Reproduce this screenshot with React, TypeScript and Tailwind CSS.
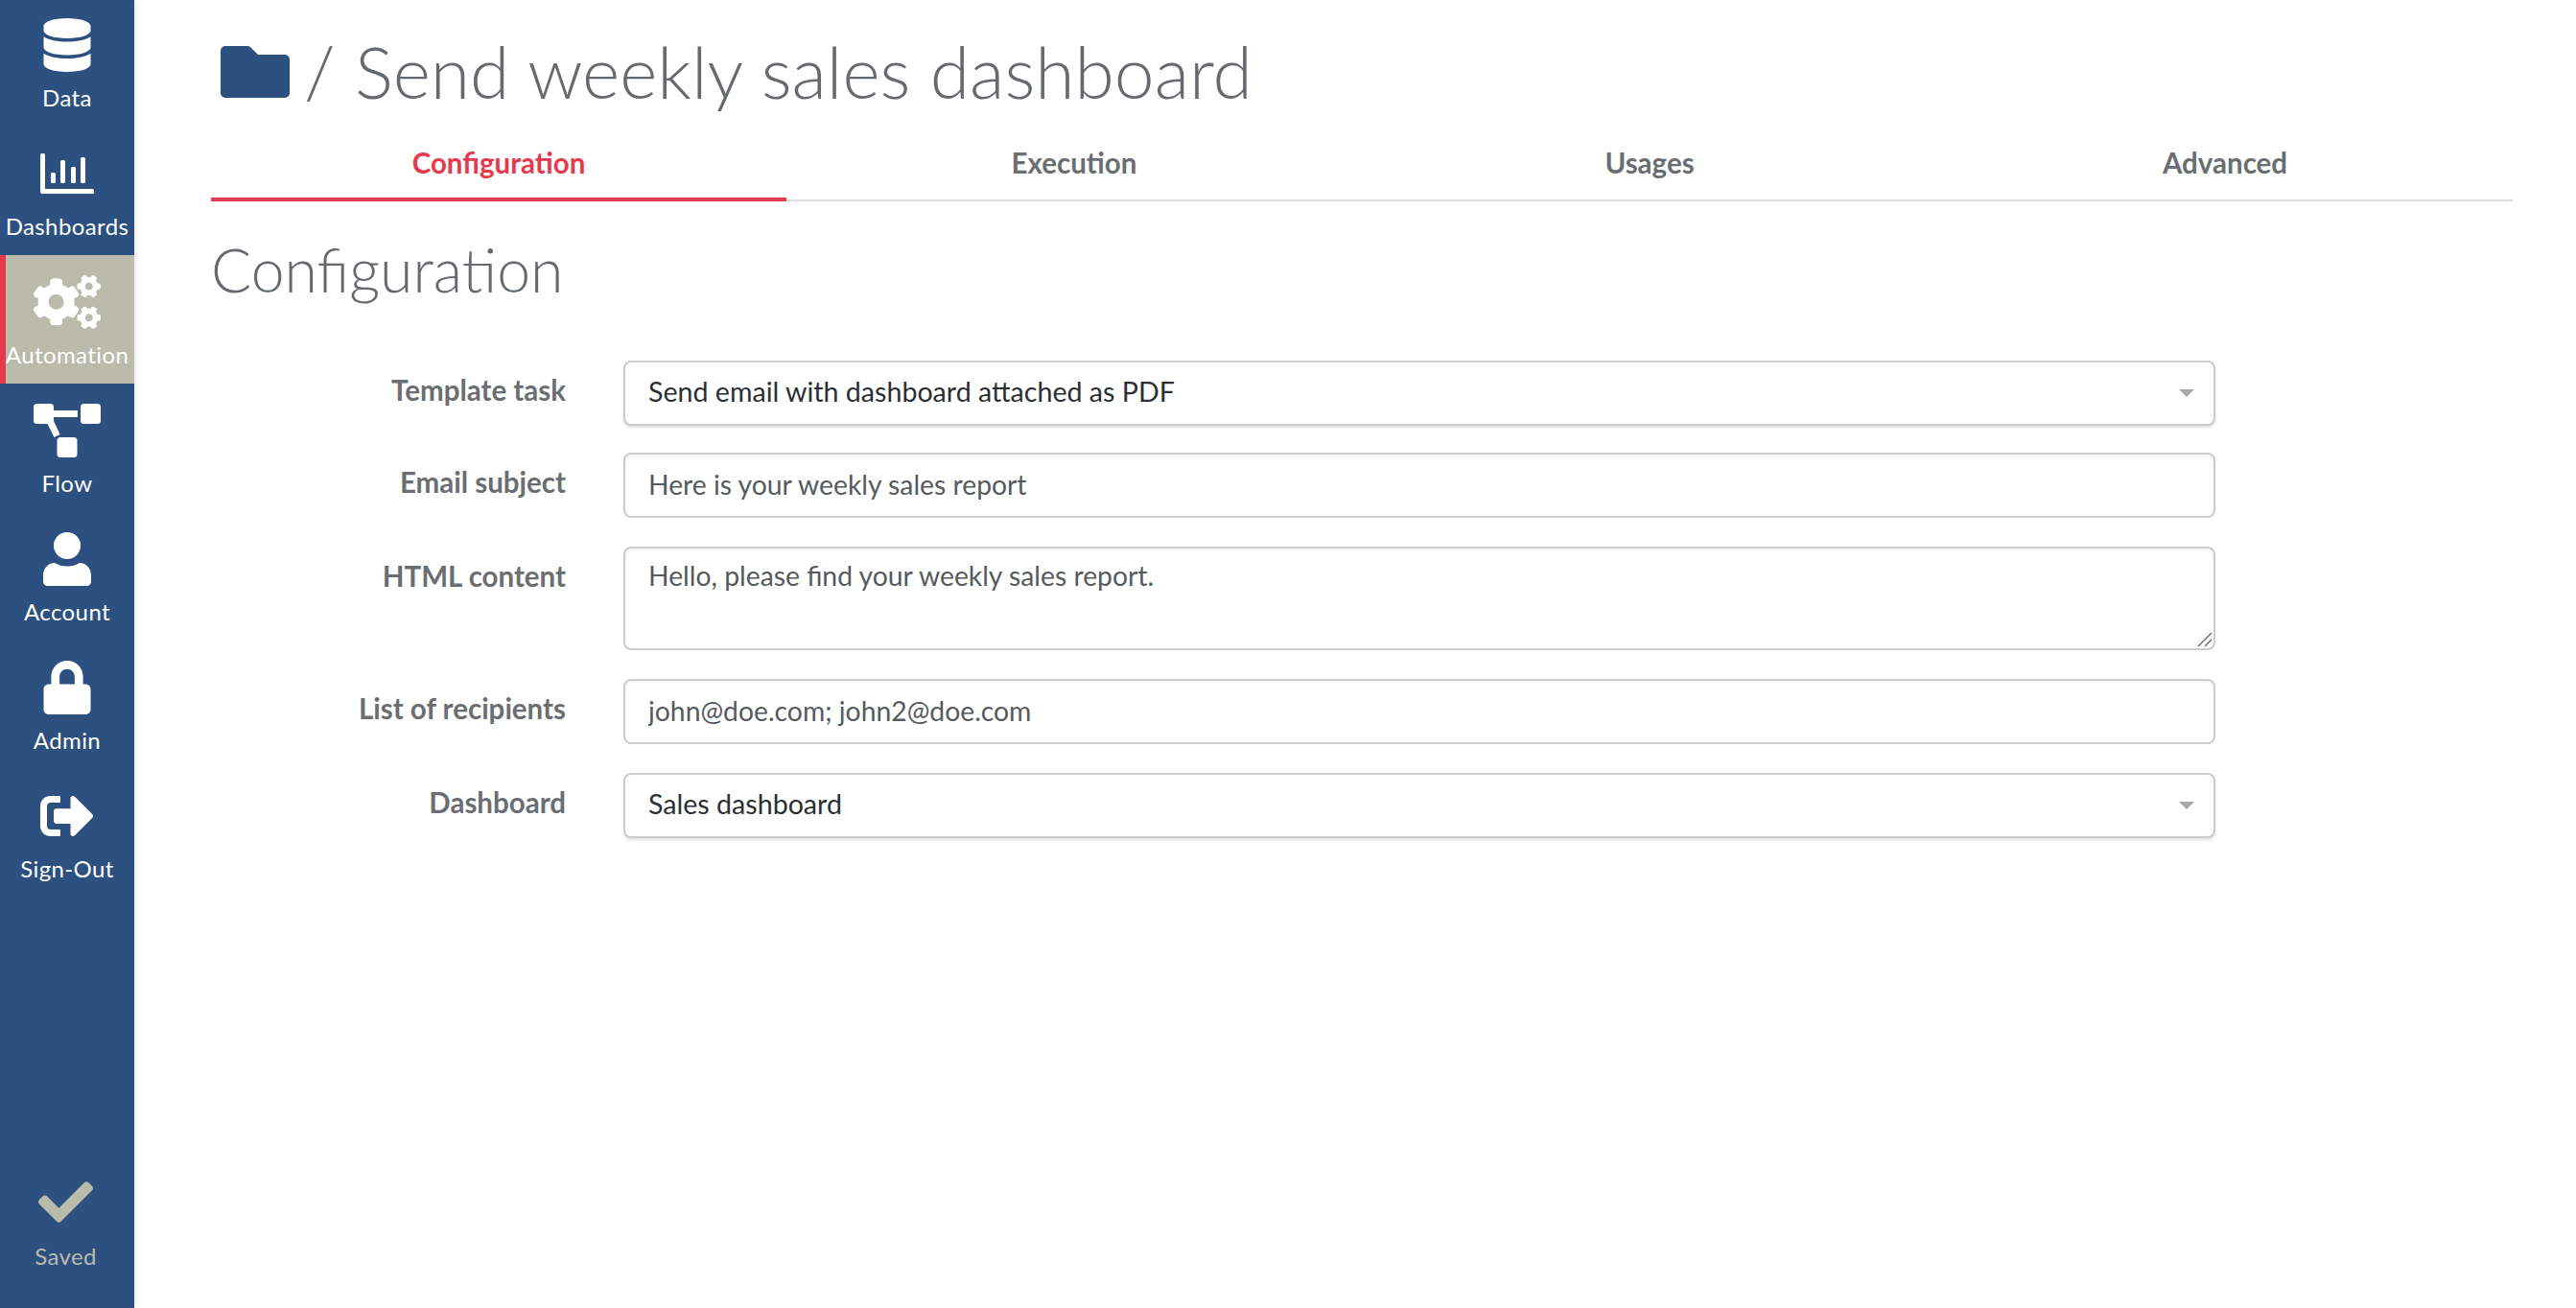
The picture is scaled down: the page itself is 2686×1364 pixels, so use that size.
import { ReactNode } from 'react';
import { FaCheck, FaCogs, FaDatabase, FaLock, FaSignOutAlt } from 'react-icons/fa';

function ChartIcon() {
  return (
    <svg width="56" height="42" viewBox="0 0 56 42" fill="currentColor">
      <path d="M1.500 0h2A1.500 1.500 0 0 1 5 1.500V37h49.500a1.500 1.500 0 0 1 1.500 1.500v2a1.500 1.500 0 0 1-1.500 1.500H2a2 2 0 0 1-2-2V1.500A1.500 1.500 0 0 1 1.500 0z" />
      <rect x="11" y="20" width="5" height="11" rx="1.500" />
      <rect x="21" y="7" width="5" height="24" rx="1.500" />
      <rect x="32" y="14" width="5" height="17" rx="1.500" />
      <rect x="42" y="4" width="5" height="27" rx="1.500" />
    </svg>
  );
}

function FlowIcon() {
  return (
    <svg width="70" height="56" viewBox="0 0 70 56" fill="currentColor">
      <rect x="0" y="0" width="21" height="21" rx="3.500" />
      <rect x="49" y="0" width="21" height="21" rx="3.500" />
      <rect x="24.500" y="35" width="21" height="21" rx="3.500" />
      <rect x="18" y="7" width="28" height="7" />
      <path d="M14 20l7-2 6.500 14-6 3z" />
    </svg>
  );
}

function UserIcon() {
  return (
    <svg width="50" height="56" viewBox="0 0 50 56" fill="currentColor">
      <circle cx="25" cy="14" r="14" />
      <path d="M12 32c4 2.500 8 3.500 13 3.500s9-1 13-3.500c7 0 12 6 12 13v6c0 3-2 5-5 5H5c-3 0-5-2-5-5v-6c0-7 5-13 12-13z" />
    </svg>
  );
}

function FolderIcon() {
  return (
    <svg width="72" height="54" viewBox="0 0 72 54" fill="#2c5080">
      <path d="M5 0h23c1.500 0 2.500.5 3.500 1.500L39 9h28a5 5 0 0 1 5 5v35a5 5 0 0 1-5 5H5a5 5 0 0 1-5-5V5a5 5 0 0 1 5-5z" />
    </svg>
  );
}

function Caret() {
  return (
    <svg width="16" height="8" viewBox="0 0 16 8" fill="#a9a9a9" className="shrink-0">
      <path d="M0 0h16l-8 8z" />
    </svg>
  );
}

function NavItem({ icon, label, active }: { icon: ReactNode; label: string; active?: boolean }) {
  return (
    <div
      className={`flex h-[134px] flex-col items-center pt-[21px] ${
        active ? 'border-l-[6px] border-[#e53a4d] bg-[#babbab] pr-[6px]' : ''
      }`}
    >
      <div className="flex h-[56px] items-center justify-center">{icon}</div>
      <span className="mt-[13px] text-[24px] leading-[28px] tracking-[0.4px] whitespace-nowrap">{label}</span>
    </div>
  );
}

function Field({ label, children, className }: { label: string; children: ReactNode; className?: string }) {
  return (
    <div className={`flex items-start ${className ?? ''}`}>
      <label className="w-[370px] shrink-0 pt-[13px] text-right text-[29.500px] leading-[36px] font-bold text-[#6a6e72]">
        {label}
      </label>
      <div className="ml-[60px] flex-1">{children}</div>
    </div>
  );
}

const boxClass =
  'w-full rounded-[8px] border-2 border-[#cccccc] bg-white px-[24px] text-[28.300px] text-[#555a5e] outline-none shadow-[inset_0_2px_3px_rgba(0,0,0,0.05)]';

function SelectBox({ value }: { value: string }) {
  return (
    <div className="flex h-[68px] w-full items-center justify-between rounded-[8px] border-2 border-[#cccccc] bg-white pr-[20px] pl-[24px] text-[28.600px] text-[#2b2f33] shadow-[0_2px_3px_rgba(0,0,0,0.12)]">
      <span className="pb-[3px]">{value}</span>
      <Caret />
    </div>
  );
}

export default function App() {
  const tabs = ['Configuration', 'Execution', 'Usages', 'Advanced'];

  return (
    <div className="flex h-screen overflow-hidden bg-white font-[Lato,sans-serif]">
      <aside className="flex w-[140px] shrink-0 flex-col justify-between bg-[#2c5080] text-white shadow-[2px_0_6px_rgba(0,0,0,0.08)]">
        <nav className="-mt-[2px]">
          <NavItem icon={<FaDatabase size={56} />} label="Data" />
          <NavItem icon={<ChartIcon />} label="Dashboards" />
          <NavItem icon={<FaCogs size={70} />} label="Automation" active />
          <NavItem icon={<FlowIcon />} label="Flow" />
          <NavItem icon={<UserIcon />} label="Account" />
          <NavItem icon={<FaLock size={56} />} label="Admin" />
          <NavItem icon={<FaSignOutAlt size={56} />} label="Sign-Out" />
        </nav>
        <div className="flex flex-col items-center pr-[3px] pb-[40px] text-[#babbab]">
          <FaCheck size={57} />
          <span className="mt-[14px] text-[24px] leading-[28px] tracking-[0.4px]">Saved</span>
        </div>
      </aside>

      <main className="flex-1 pr-[66px] pl-[80px]">
        <div className="flex h-[150px] items-start pt-[25px] pl-[10px] text-[#656a6e]">
          <div className="mt-[23px]">
            <FolderIcon />
          </div>
          <h1 className="ml-[15px] text-[75px] leading-[98px] font-light whitespace-nowrap">
            / Send weekly sales dashboard
          </h1>
        </div>

        <div className="grid grid-cols-4 border-b-2 border-[#dddddd]">
          {tabs.map((tab, i) => (
            <div
              key={tab}
              className={`-mb-[2px] flex h-[60px] items-start justify-center pt-[2px] text-[29.500px] leading-[36px] font-bold ${
                i === 0 ? 'border-b-4 border-[#e53a4d] text-[#e53a4d]' : 'text-[#6a6e72]'
              }`}
            >
              {tab}
            </div>
          ))}
        </div>

        <h2 className="mt-[33px] text-[62.500px] leading-[76px] font-light text-[#656a6e]">Configuration</h2>

        <form className="mt-[57px] flex w-[2090px] flex-col gap-[30px]">
          <Field label="Template task" className="-mb-[2px]">
            <SelectBox value="Send email with dashboard attached as PDF" />
          </Field>
          <Field label="Email subject">
            <input className={`${boxClass} h-[68px] pb-[2px]`} defaultValue="Here is your weekly sales report" />
          </Field>
          <Field label="HTML content">
            <div className="relative">
              <textarea
                className={`${boxClass} block h-[108px] resize-none pt-[10px] leading-[36px]`}
                defaultValue="Hello, please find your weekly sales report."
              />
              {/* resize grip */}
              <svg
                width="16"
                height="16"
                viewBox="0 0 16 16"
                stroke="#666666"
                strokeWidth="1.400"
                className="absolute right-[3px] bottom-[3px]"
              >
                <path d="M1 15L15 1M8 15l7-7" />
              </svg>
            </div>
          </Field>
          <Field label="List of recipients">
            <input className={`${boxClass} h-[68px] pb-[2px]`} defaultValue="john@doe.com; john2@doe.com" />
          </Field>
          <Field label="Dashboard">
            <SelectBox value="Sales dashboard" />
          </Field>
        </form>
      </main>
    </div>
  );
}
